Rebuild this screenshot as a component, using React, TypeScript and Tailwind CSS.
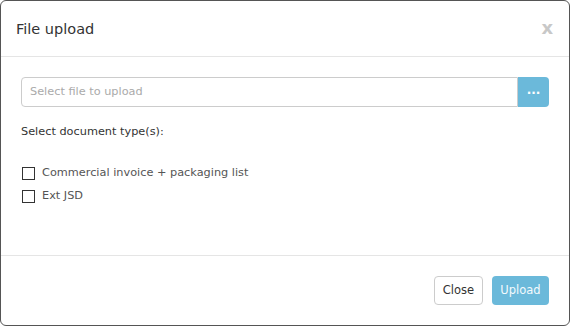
import React from "react";

export default function App() {
  return (
    <div className="w-[570px] h-[326px] bg-white" style={{ fontFamily: '"DejaVu Sans", sans-serif' }}>
      <div className="w-full h-full border border-[#555] rounded-[6px] flex flex-col bg-white">
        <div className="h-[56px] border-b border-[#e5e5e5] flex items-center justify-between pl-[15px] pr-[15px] shrink-0">
          <div className="text-[14.5px] text-[#333] leading-none pt-[2px]">File upload</div>
          <div className="text-[18px] font-bold text-[#c8c8c8] leading-none pr-[1px] pb-[1px]">x</div>
        </div>
        <div className="flex-1 px-[20px] pt-[20px]">
          <div className="flex h-[30px]">
            <div className="flex-1 border border-[#ccc] rounded-l-[4px] flex items-center pl-[8px] text-[11.3px] text-[#aaa]">
              Select file to upload
            </div>
            <div className="w-[31px] bg-[#6bb9da] rounded-r-[4px] flex items-center justify-center text-white text-[12px] font-bold pb-[4px]">
              ...
            </div>
          </div>
          <div className="mt-[17px] text-[11.3px] text-[#333] leading-[16px]">Select document type(s):</div>
          <div className="mt-[24px] flex flex-col gap-[5px]">
            <label className="flex items-center h-[18px]">
              <span className="w-[13px] h-[13px] border border-[#333] ml-[1px] bg-white" />
              <span className="ml-[7px] text-[11.3px] text-[#555]">Commercial invoice + packaging list</span>
            </label>
            <label className="flex items-center h-[18px]">
              <span className="w-[13px] h-[13px] border border-[#333] ml-[1px] bg-white" />
              <span className="ml-[7px] text-[11.3px] text-[#555]">Ext JSD</span>
            </label>
          </div>
        </div>
        <div className="h-[70px] border-t border-[#e5e5e5] flex items-center justify-end gap-[9px] pr-[20px] shrink-0">
          <div className="h-[29px] w-[49px] border border-[#ccc] rounded-[4px] flex items-center justify-center text-[11.5px] text-[#333] bg-white">Close</div>
          <div className="h-[29px] w-[57px] rounded-[4px] flex items-center justify-center text-[11.5px] text-[#f4fafd] bg-[#6bb9da]">Upload</div>
        </div>
      </div>
    </div>
  );
}
